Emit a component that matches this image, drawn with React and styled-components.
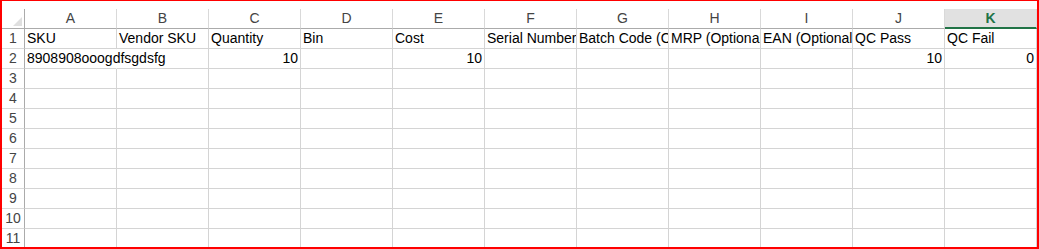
import React from 'react';
import styled, { createGlobalStyle } from 'styled-components';

const COLUMNS = ['A', 'B', 'C', 'D', 'E', 'F', 'G', 'H', 'I', 'J', 'K'];
const ACTIVE_COLUMN = 'K';
const ROW_COUNT = 11;

// sheet contents, keyed by row number then column letter
const cells = {
  1: {
    A: 'SKU',
    B: 'Vendor SKU',
    C: 'Quantity',
    D: 'Bin',
    E: 'Cost',
    F: 'Serial Number',
    G: 'Batch Code (Optional)',
    H: 'MRP (Optional)',
    I: 'EAN (Optional)',
    J: 'QC Pass',
    K: 'QC Fail',
  },
  2: {
    A: '8908908ooogdfsgdsfg',
    C: 10,
    E: 10,
    J: 10,
    K: 0,
  },
};

const GlobalStyle = createGlobalStyle`
  html, body {
    margin: 0;
    padding: 0;
    background: #ffffff;
  }
`;

const Frame = styled.div`
  box-sizing: border-box;
  width: 1039px;
  height: 249px;
  overflow: hidden;
  padding-top: 8px;
  background: #ffffff;
  border: 2px solid #ff0000;
  border-top-width: 1px;
  font-family: 'Liberation Sans', Arial, sans-serif;
  font-size: 14px;
`;

const Sheet = styled.div`
  display: grid;
  grid-template-columns: 23px repeat(${COLUMNS.length}, 92px);
  grid-auto-rows: 20px;
`;

const Corner = styled.div`
  box-sizing: border-box;
  position: relative;
  border-right: 1px solid #ababab;
  border-bottom: 1px solid #ababab;

  &::after {
    content: '';
    position: absolute;
    right: 2px;
    bottom: 2px;
    width: 9px;
    height: 9px;
    background: #dfdfdf;
    clip-path: polygon(100% 0, 100% 100%, 0 100%);
  }
`;

const ColumnHead = styled.div`
  box-sizing: border-box;
  border-right: 1px solid #d9d9d9;
  border-bottom: ${(p) => (p.$active ? '2px solid #217346' : '1px solid #ababab')};
  background: ${(p) => (p.$active ? '#e1e1e1' : '#ffffff')};
  color: ${(p) => (p.$active ? '#217346' : '#444444')};
  font-weight: ${(p) => (p.$active ? 700 : 400)};
  line-height: 19px;
  text-align: center;
`;

const RowHead = styled.div`
  box-sizing: border-box;
  border-right: 1px solid #ababab;
  border-bottom: 1px solid #d9d9d9;
  color: #444444;
  line-height: 19px;
  text-align: center;
`;

const Cell = styled.div`
  box-sizing: border-box;
  border-right: 1px solid ${(p) => (p.$spill ? 'transparent' : '#d4d4d4')};
  border-bottom: 1px solid #d4d4d4;
  padding: 0 2px;
  color: #000000;
  line-height: 19px;
  white-space: nowrap;
  overflow: ${(p) => (p.$spill ? 'visible' : 'hidden')};
  text-align: ${(p) => (p.$numeric ? 'right' : 'left')};
`;

const Spreadsheet = () => {
  const rows = Array.from({ length: ROW_COUNT }, (_, i) => i + 1);

  return (
    <Frame>
      <Sheet>
        <Corner />
        {COLUMNS.map((col) => (
          <ColumnHead key={col} $active={col === ACTIVE_COLUMN}>
            {col}
          </ColumnHead>
        ))}

        {rows.map((row) => {
          const data = cells[row] || {};
          return (
            <React.Fragment key={row}>
              <RowHead>{row}</RowHead>
              {COLUMNS.map((col, index) => {
                const value = data[col];
                const next = data[COLUMNS[index + 1]];
                const numeric = typeof value === 'number';
                // text runs on into the next column while that one is empty
                const spill =
                  !numeric && value !== undefined && next === undefined && index < COLUMNS.length - 1;
                return (
                  <Cell key={col} $numeric={numeric} $spill={spill}>
                    {value}
                  </Cell>
                );
              })}
            </React.Fragment>
          );
        })}
      </Sheet>
    </Frame>
  );
};

export default function App() {
  return (
    <>
      <GlobalStyle />
      <Spreadsheet />
    </>
  );
}
